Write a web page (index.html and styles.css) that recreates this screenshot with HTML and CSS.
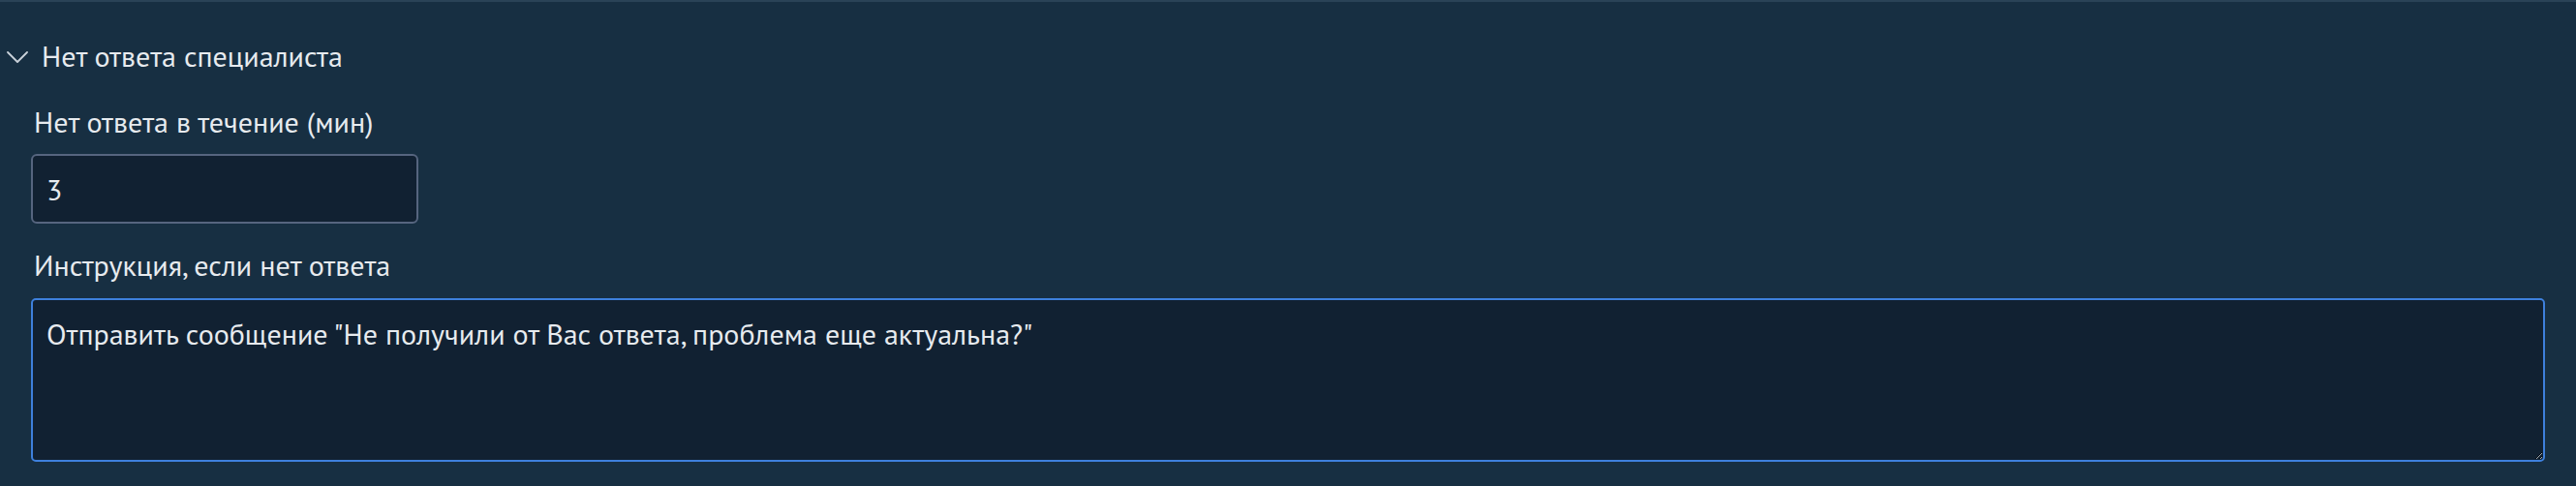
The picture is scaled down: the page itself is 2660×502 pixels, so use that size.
FILE: index.html
```html
<!DOCTYPE html>
<html lang="ru">
<head>
<meta charset="utf-8">
<title>Нет ответа специалиста</title>
<link rel="stylesheet" href="styles.css">
</head>
<body>
<section class="panel">
  <div class="section-header">
    <svg class="chevron" width="22" height="12" viewBox="0 0 22 12" aria-hidden="true">
      <path d="M1 1 L11 11 L21 1" fill="none" stroke="#c9d1d9" stroke-width="1.8" stroke-linecap="round" stroke-linejoin="round"/>
    </svg>
    <span class="section-title">Нет ответа специалиста</span>
  </div>
  <div class="section-body">
    <label class="field-label" for="timeout">Нет ответа в течение (мин)</label>
    <input class="field-input" id="timeout" type="text" value="3">
    <label class="field-label field-label-gap" for="instr">Инструкция, если нет ответа</label>
    <textarea class="field-textarea" id="instr">Отправить сообщение "Не получили от Вас ответа, проблема еще актуальна?"</textarea>
  </div>
</section>
</body>
</html>
```
FILE: styles.css
```css
html, body {
  margin: 0;
  padding: 0;
  background: #172f42;
}
body {
  font-family: "PT Sans", "Noto Sans", sans-serif;
  font-size: 30px;
  color: #e7ebef;
  height: 502px;
  overflow: hidden;
}
.panel {
  border-top: 2px solid #2a4357;
}
.section-header {
  display: flex;
  align-items: center;
  gap: 14px;
  padding-left: 7px;
  margin-top: 36px;
  height: 40px;
  line-height: 40px;
}
.chevron {
  display: block;
  flex: none;
  margin-top: 1px;
}
.section-title {
  color: #e7ebef;
}
.section-body {
  display: flex;
  flex-direction: column;
  align-items: flex-start;
  padding: 0 32px;
  margin-top: 28px;
}
.field-label {
  display: block;
  line-height: 40px;
  padding-left: 3px;
  color: #e7ebef;
}
.field-label-gap {
  margin-top: 23px;
}
.field-input {
  margin: 13px 0 0;
  box-sizing: border-box;
  width: 400px;
  height: 72px;
  padding: 0 14px;
  border: 2px solid #56657f;
  border-radius: 6px;
  background: #112132;
  color: #e7ebef;
  font: inherit;
  outline: none;
}
.field-textarea {
  margin: 14px 0 0;
  box-sizing: border-box;
  width: 100%;
  height: 169px;
  padding: 15px 14px;
  border: 2px solid #3e80dc;
  border-radius: 5px;
  background: #112132;
  color: #e7ebef;
  font: inherit;
  line-height: 40px;
  outline: none;
  resize: vertical;
  display: block;
}
```
